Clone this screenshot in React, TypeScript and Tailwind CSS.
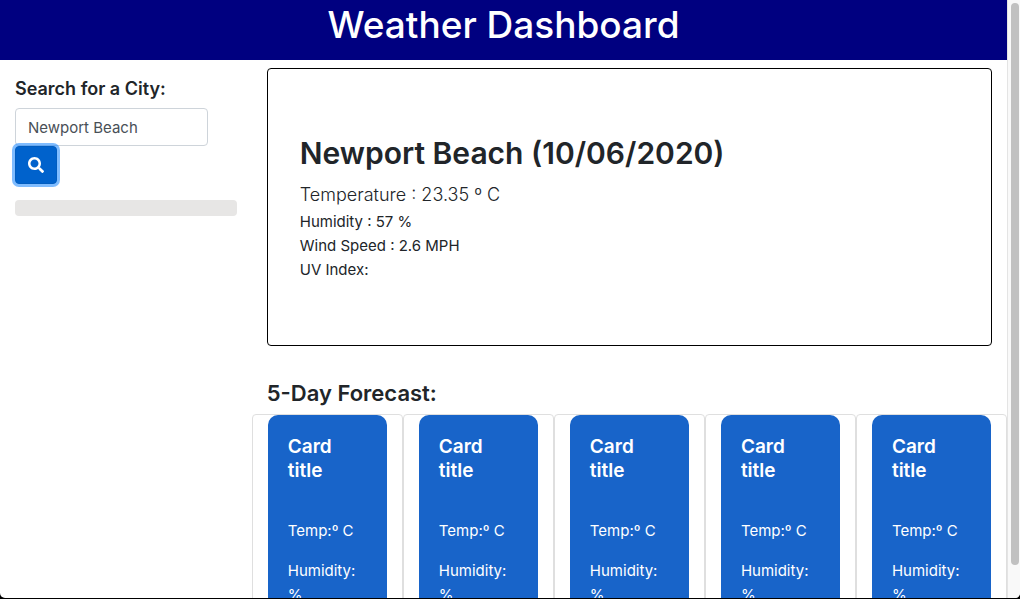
import { useState } from "react";
import { FaSearch } from "react-icons/fa";

const forecastDays = [1, 2, 3, 4, 5];

function Header() {
  return (
    <header className="h-[60px] bg-[#000080] pt-px text-center">
      <h1 className="text-[37px] leading-[48px] font-medium text-white">Weather Dashboard</h1>
    </header>
  );
}

function SearchPanel() {
  const [city, setCity] = useState("Newport Beach");
  return (
    <aside className="w-1/4 shrink-0 px-[15px] pt-[17px]">
      <form onSubmit={(event) => event.preventDefault()}>
        <label htmlFor="city" className="mb-[7px] block text-[18px] leading-6 font-semibold">
          Search for a City:
        </label>
        <input
          id="city"
          type="text"
          value={city}
          onChange={(event) => setCity(event.target.value)}
          className="block h-[38px] w-[193px] rounded border border-[#ced4da] bg-white px-3 text-[15px] text-[#495057] outline-none"
        />
        <button
          type="submit"
          aria-label="Search"
          className="flex h-[38px] w-[42px] items-center justify-center rounded border border-[#005cbf] bg-[#0062cc] text-white ring-3 ring-[#007bff]/50 outline-none"
        >
          <FaSearch className="size-4" />
        </button>
      </form>
      <div className="mt-4 h-4 rounded bg-[#e7e6e5]" />
    </aside>
  );
}

function CurrentWeather() {
  return (
    <section className="mx-[15px] mt-2 mb-[33px] rounded border border-black px-8 pt-[65px] pb-[63px]">
      <h2 className="mb-2 text-[30px] leading-[38px] font-semibold">Newport Beach (10/06/2020)</h2>
      <p className="text-[18px] leading-[30px] font-light">Temperature : 23.35 º C</p>
      <p className="text-[15px] leading-6">Humidity : 57 %</p>
      <p className="text-[15px] leading-6">Wind Speed : 2.6 MPH</p>
      <p className="text-[15px] leading-6">UV Index:</p>
    </section>
  );
}

function ForecastCard() {
  return (
    <article className="flex-1 rounded border border-[#dfdfdf] px-[15px]">
      <div className="h-full rounded-[10px] bg-[#1864c9] px-5 pt-5 pb-9 text-[15px] leading-6 text-white">
        <h4 className="mb-9 text-[19px] leading-6 font-semibold">
          Card
          <br />
          title
        </h4>
        <p className="mb-4">Temp:º C</p>
        <p>Humidity: %</p>
      </div>
    </article>
  );
}

function Forecast() {
  return (
    <section>
      <h3 className="mb-[7px] px-[15px] text-[22px] leading-7 font-semibold">5-Day Forecast:</h3>
      <div className="flex">
        {forecastDays.map((day) => (
          <ForecastCard key={day} />
        ))}
      </div>
    </section>
  );
}

export default function App() {
  return (
    <div className="h-screen bg-black pb-px font-['Inter',sans-serif] text-[#212529]">
      <div className="flex h-full overflow-hidden rounded-b-[5px] bg-white">
        <div className="min-w-0 flex-1 overflow-y-auto [scrollbar-width:none]">
          <Header />
          <main className="flex">
            <SearchPanel />
            <div className="min-w-0 flex-1">
              <CurrentWeather />
              <Forecast />
            </div>
          </main>
        </div>
        <div className="w-[13px] shrink-0 border-l border-[#e4e4e4] bg-[#f9f9f9] pt-[3px] pr-px pl-[3px]" aria-hidden="true">
          <div className="h-[94.5%] rounded-full bg-[#c1c1c1]" />
        </div>
      </div>
    </div>
  );
}
